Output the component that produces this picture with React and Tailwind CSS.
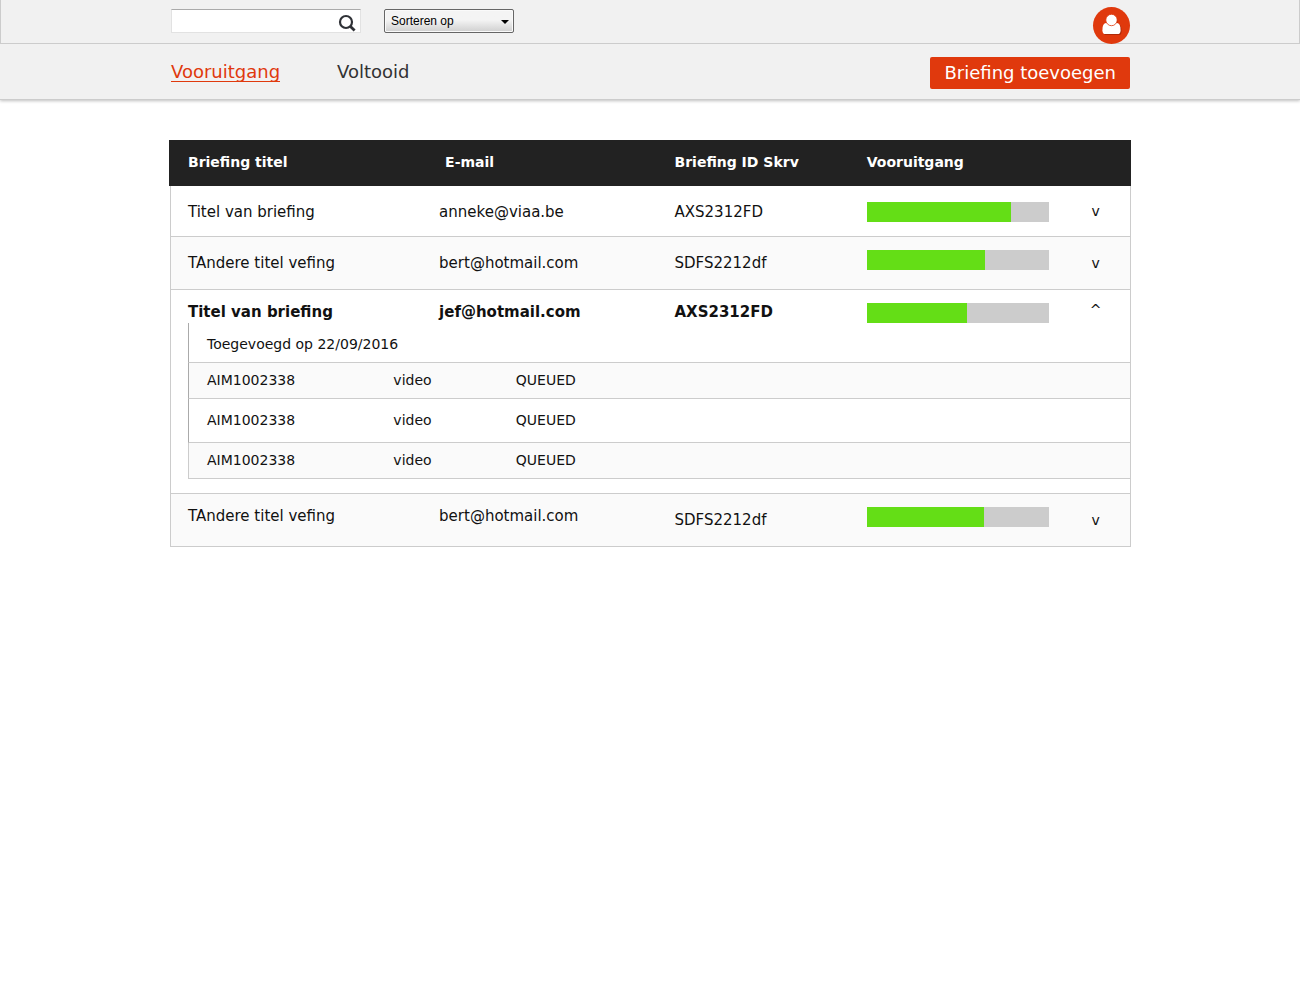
import React from "react";

const rows = [
  {
    title: "Titel van briefing",
    email: "anneke@viaa.be",
    id: "AXS2312FD",
    progress: 79,
    rowClass: "h-[51px]",
    barClass: "pt-[16px]",
    textClass: "align-middle pt-0.5",
    idClass: "align-middle pt-0.5",
  },
  {
    title: "TAndere titel vefing",
    email: "bert@hotmail.com",
    id: "SDFS2212df",
    progress: 65,
    rowClass: "h-[53px] bg-[#fafafa]",
    barClass: "pt-[13px]",
    textClass: "align-middle",
    idClass: "align-middle",
  },
  {
    title: "Titel van briefing",
    email: "jef@hotmail.com",
    id: "AXS2312FD",
    progress: 55,
    open: true,
    rowClass: "h-[33px] font-bold",
    barClass: "pt-[13px]",
    textClass: "align-top pt-[12px]",
    idClass: "align-top pt-[12px]",
    added: "Toegevoegd op 22/09/2016",
    items: [
      { id: "AIM1002338", type: "video", status: "QUEUED", cls: "h-[36px] bg-[#fafafa]", edge: "border-l-[#aaa]" },
      { id: "AIM1002338", type: "video", status: "QUEUED", cls: "h-[44px]", edge: "border-l-[#aaa]" },
      { id: "AIM1002338", type: "video", status: "QUEUED", cls: "h-[36px] bg-[#fafafa]", edge: "border-l-[#ccc]" },
    ],
  },
  {
    title: "TAndere titel vefing",
    email: "bert@hotmail.com",
    id: "SDFS2212df",
    progress: 64,
    rowClass: "h-[53px] bg-[#fafafa]",
    barClass: "pt-[13px]",
    textClass: "align-top pt-[12px]",
    idClass: "align-middle",
  },
];

function SearchIcon() {
  return (
    <svg viewBox="0 0 18 18" className="size-[18px]" fill="none" stroke="#2f3136" aria-hidden="true">
      <circle cx="8" cy="8" r="6" strokeWidth="2.2" />
      <path d="M12.2 12.2 L16.6 16.6" strokeWidth="2.8" />
    </svg>
  );
}

function UserIcon() {
  return (
    <svg viewBox="0 0 37 37" className="size-[37px]" aria-hidden="true">
      <g fill="#8f2106" opacity="0.6" transform="translate(1 1)">
        <circle cx="18.5" cy="13" r="5.2" />
        <path d="M12.8 16 C10.3 16.6 9.4 19.2 9.4 23.2 C9.4 26.2 10.5 27 12.6 27 H24.4 C26.5 27 27.6 26.2 27.6 23.2 C27.6 19.2 26.7 16.6 24.2 16 Z" />
      </g>
      <path
        d="M12.8 16 C10.3 16.6 9.4 19.2 9.4 23.2 C9.4 26.2 10.5 27 12.6 27 H24.4 C26.5 27 27.6 26.2 27.6 23.2 C27.6 19.2 26.7 16.6 24.2 16 Z"
        fill="#fff"
      />
      <circle cx="18.5" cy="13" r="5.7" fill="#fff" stroke="#e0390d" strokeWidth="0.8" />
    </svg>
  );
}

function Progress({ value }) {
  return (
    <div role="progressbar" aria-valuenow={value} aria-label="Vooruitgang" className="h-5 bg-[#ccc]">
      <div className="h-5 bg-[#64de16]" style={{ width: `${value}%` }} />
    </div>
  );
}

function Details({ row }) {
  return (
    <tr>
      <td colSpan={5} className="border-x border-b border-[#ccc] pb-[14px] pl-[17px]">
        <table className="w-full table-fixed border-separate border-spacing-0 text-sm leading-5">
          <colgroup>
            <col className="w-[21.8%]" />
            <col className="w-[13%]" />
            <col />
          </colgroup>
          <tbody>
            <tr className="h-[40px]">
              <td colSpan={3} className="border-b border-l border-b-[#ccc] border-l-[#aaa] pt-0.5 pl-[18px]">
                {row.added}
              </td>
            </tr>
            {row.items.map((item, i) => (
              <tr key={i} className={item.cls}>
                <td className={`border-b border-l border-b-[#ccc] pb-0.5 pl-[18px] ${item.edge}`}>{item.id}</td>
                <td className="border-b border-[#ccc] pb-0.5">{item.type}</td>
                <td className="border-b border-[#ccc] pb-0.5">{item.status}</td>
              </tr>
            ))}
          </tbody>
        </table>
      </td>
    </tr>
  );
}

function Row({ row }) {
  const line = row.open ? "border-[#ccc]" : "border-b border-[#ccc]";
  return (
    <>
      <tr className={row.rowClass}>
        <td className={`border-l pl-[17px] ${line} ${row.textClass}`}>{row.title}</td>
        <td className={`${line} ${row.textClass}`}>{row.email}</td>
        <td className={`${line} ${row.idClass}`}>{row.id}</td>
        <td className={`align-top ${line} ${row.barClass}`}>
          <Progress value={row.progress} />
        </td>
        <td className={`border-r text-center ${line} ${row.open ? "align-top pt-[10px]" : "align-middle"}`}>
          <button type="button" aria-expanded={!!row.open} className="pr-3 pl-6 text-sm leading-5 font-normal">
            {row.open ? "^" : "v"}
          </button>
        </td>
      </tr>
      {row.open && <Details row={row} />}
    </>
  );
}

export default function App() {
  return (
    <div className="min-h-screen bg-white font-[Verdana,'DejaVu_Sans',sans-serif] text-[#111]">
      <header className="border-b border-[#ccc] bg-[#f1f1f1] shadow-[0_1px_3px_rgba(0,0,0,0.25)]">
        <div className="border-x border-b border-[#ccc]">
          <div className="mx-auto flex h-[43px] max-w-[960px] items-center pb-px pl-px">
            <div className="flex h-6 w-[190px] items-center border border-[#e2e2e2] border-t-[#aaa] bg-white">
              <input type="search" aria-label="Zoeken" className="h-full min-w-0 flex-1 px-2 text-xs outline-none" />
              <button type="button" aria-label="Zoek" className="mt-1 mr-1">
                <SearchIcon />
              </button>
            </div>
            <div className="relative ml-[23px]">
              <select
                aria-label="Sorteren op"
                className="block h-6 w-[130px] appearance-none rounded-[2px] border border-[#666] bg-linear-to-b from-[#f4f4f4] from-45% to-[#cfcfcf] pl-[6px] font-['Liberation_Sans',Arial,sans-serif] text-xs text-black shadow-[inset_0_0_0_1px_#fafafa]"
              >
                <option>Sorteren op</option>
              </select>
              <svg viewBox="0 0 8 4" className="pointer-events-none absolute top-[11px] right-[5px] h-1 w-2" aria-hidden="true">
                <path d="M0 0 H8 L4 4 Z" fill="#000" />
              </svg>
            </div>
            <button type="button" aria-label="Profiel" className="mt-[9px] ml-auto rounded-full bg-[#e0390d]">
              <UserIcon />
            </button>
          </div>
        </div>
        <div className="mx-auto flex h-[55px] max-w-[960px] items-center">
          <nav className="flex gap-[57px] pt-0.5 pl-px text-lg leading-[18px]">
            <a href="#vooruitgang" className="border-b border-[#e0390d] text-[#e0390d]">
              Vooruitgang
            </a>
            <a href="#voltooid" className="text-[#333]">
              Voltooid
            </a>
          </nav>
          <button type="button" className="mt-[3px] ml-auto h-8 rounded-[2px] bg-[#e0390d] px-[14px] text-lg leading-8 text-white">
            Briefing toevoegen
          </button>
        </div>
      </header>

      <main className="mx-auto max-w-[962px] pt-10 pl-px">
        <table className="w-full table-fixed border-separate border-spacing-0 text-[15px] leading-5">
          <colgroup>
            <col className="w-[28%]" />
            <col className="w-[24.5%]" />
            <col className="w-[20%]" />
            <col className="w-[19%]" />
            <col className="w-[8.5%]" />
          </colgroup>
          <thead>
            <tr className="h-[46px] bg-[#222] text-left text-sm text-white shadow-[-1px_0_#222]">
              <th className="pb-0.5 pl-[18px]">Briefing titel</th>
              <th className="pb-0.5 pl-[6px]">E-mail</th>
              <th className="pb-0.5">Briefing ID Skrv</th>
              <th className="pb-0.5">Vooruitgang</th>
              <th aria-label="Details" />
            </tr>
          </thead>
          <tbody>
            {rows.map((row, i) => (
              <Row key={i} row={row} />
            ))}
          </tbody>
        </table>
      </main>
    </div>
  );
}
